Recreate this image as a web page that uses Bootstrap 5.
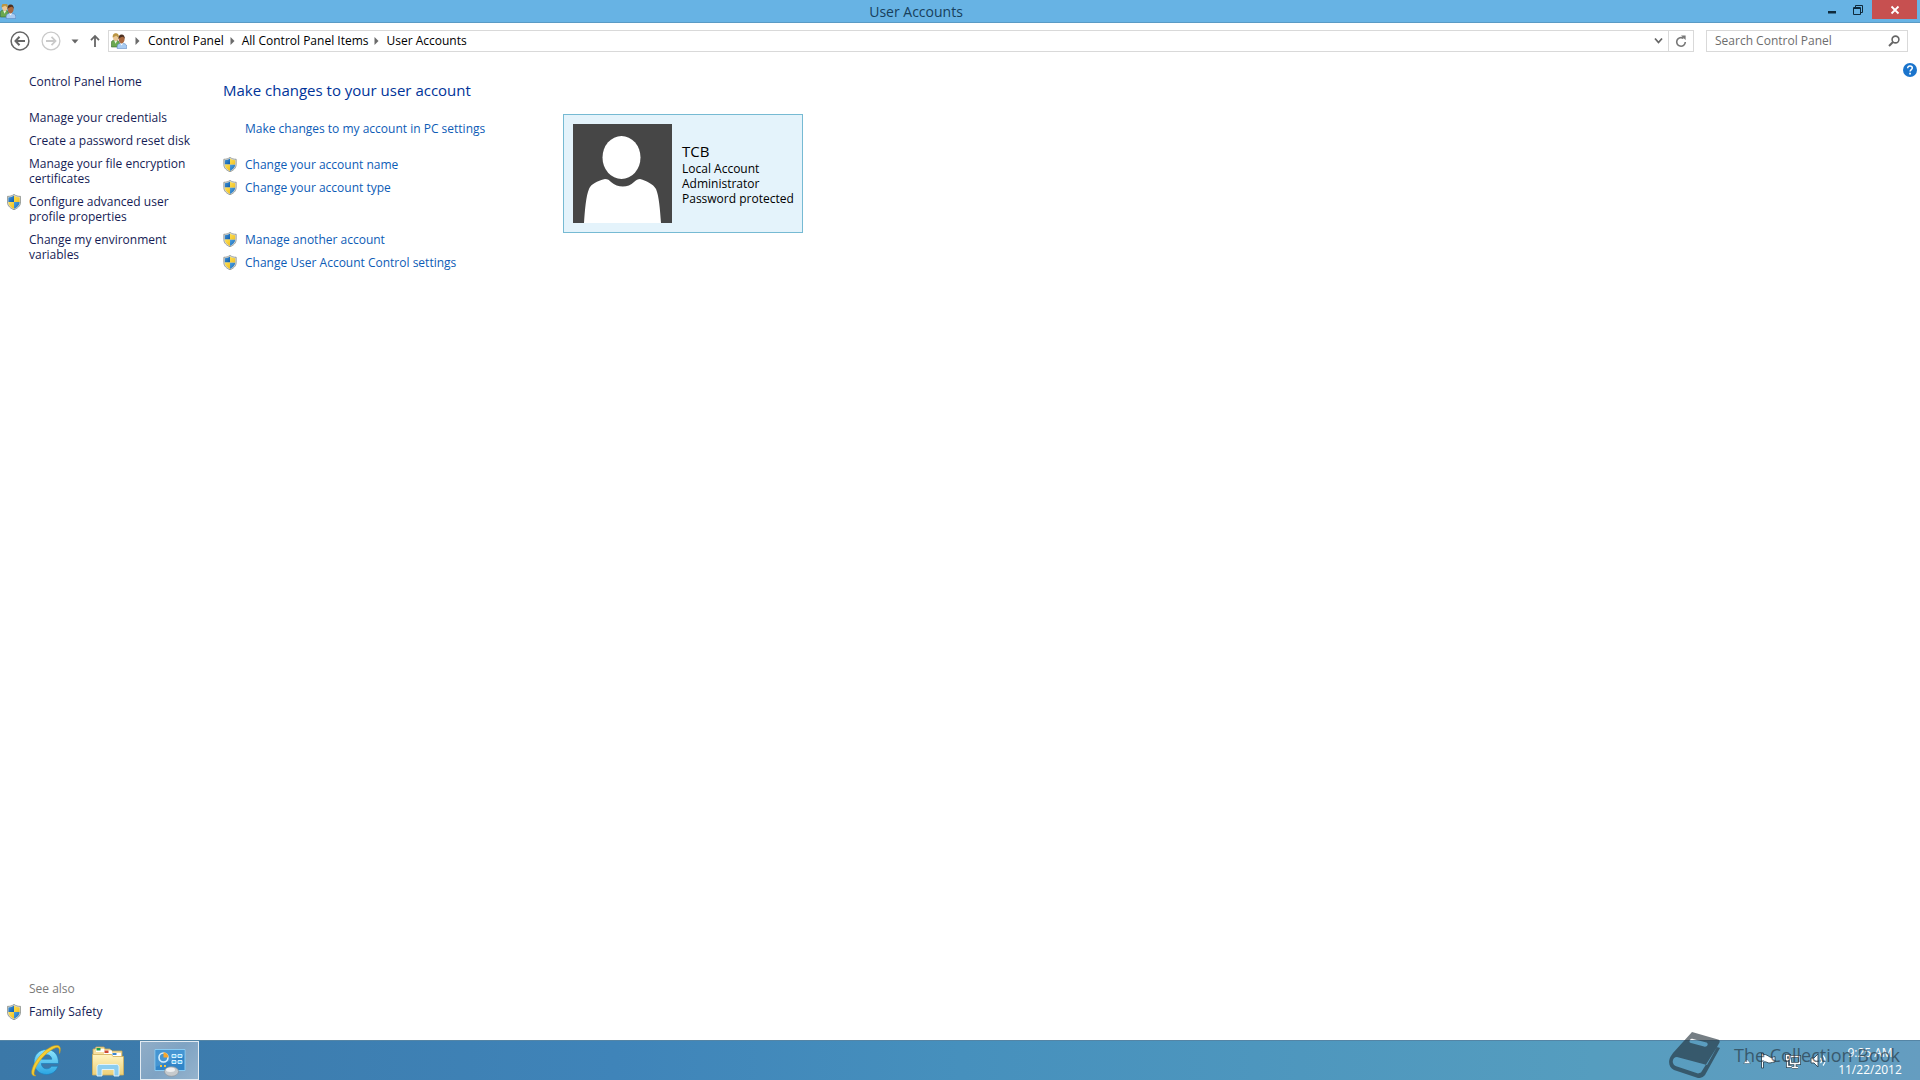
<!DOCTYPE html>
<html lang="en">
<head>
<meta charset="utf-8">
<meta name="viewport" content="width=device-width, initial-scale=1">
<title>User Accounts</title>
<link href="https://cdn.jsdelivr.net/npm/bootstrap@5.3.0/dist/css/bootstrap.min.css" rel="stylesheet">
<script src="https://cdn.jsdelivr.net/npm/bootstrap@5.3.0/dist/js/bootstrap.bundle.min.js"></script>
<style>
body{font:12px/15px "Open Sans","Noto Sans",sans-serif;color:#000;background:#fff}
button{border:0;background:none;padding:0;display:flex;align-items:center;justify-content:center}
svg{display:block;flex:none}
a{text-decoration:none}
a:hover{text-decoration:underline}
.titlebar{height:23px;background:#67b3e4;border-bottom:1px solid #5a9bc5}
.titlebar h1{font-size:14px;line-height:24px;color:#17405c}
.title-end{width:104px;padding-right:3px}
.title-end button{height:19px;width:26px}
.title-end .close-btn{width:45px;background:#c75050}
.toolbar{height:36px;padding:0 12px 0 10px;gap:8px}
.nav-btns{width:90px}
.address{height:22px;border:1px solid #d9d9d9;padding-left:2px}
.address a,.searchbox input{line-height:15px;margin-bottom:1px}
.address a{color:#000}
.crumb-arrow{width:18px}
.crumb-first{width:21px}
.address button{height:20px;width:19px}
.address .refresh{width:25px;border-left:1px solid #d9d9d9}
.searchbox{height:22px;width:202px;border:1px solid #d9d9d9;padding:0 7px 0 8px}
.searchbox input{border:0;outline:0;background:none;padding:0;width:100%}
.searchbox input::placeholder{color:#6d6d6d;opacity:1}
.side{width:202px;padding:15px 8px 20px 7px}
.side a{color:#151c55}
.side-home{margin:0 0 21px 22px}
.side ul{display:flex;flex-direction:column;gap:8px}
.slot{width:14px;flex:none}
.row-link{display:flex;gap:8px}
.see{color:#7a7a7a;margin:0 0 8px 22px}
.tasks{padding:20px 0 0 21px;width:361px}
.tasks h2{font-size:15px;line-height:22px;color:#039;margin:0 0 20px}
.tasks a{color:#0d5cb6}
.tasks ul{display:flex;flex-direction:column;gap:8px;margin-bottom:21px}
.tasks ul+ul+ul{margin-top:37px}
.account{width:240px;height:119px;border:1px solid #76bad3;background:#e4f3fb;margin-top:55px;padding:0 9px;gap:10px}
.account h3{font-size:15px;line-height:20px;margin:0}
.help-btn{margin:4px 3px 0 0;width:14px;height:14px}
.taskbar{height:40px;border-top:1px solid #5585a5;color:#fff;background:linear-gradient(90deg,#3b78a8,#3f84b9 32%,#4690bd 50%,#559dbf 83%,#659dc0);padding-left:16px}
.taskbar .task{width:60px;height:39px}
.taskbar .task+.task{width:64px}
.taskbar .task.active{width:59px;border:1px solid #e3ebf2;background:linear-gradient(135deg,#90adc7,#7fa3c3 50%,#94b3cd)}
.tray{gap:9px;padding-right:16px}
.clock{width:68px;line-height:17px;text-align:center}
.watermark{right:20px;bottom:2px;color:#22303a;opacity:.62;font-size:18px;line-height:46px;gap:14px;pointer-events:none}
</style>
</head>
<body class="d-flex flex-column min-vh-100 position-relative">
<svg width="0" height="0" class="position-absolute" aria-hidden="true">
<defs>
<linearGradient id="gb" x2="1" y2="1"><stop stop-color="#4fa3e2"/><stop offset="1" stop-color="#0f5cab"/></linearGradient>
<linearGradient id="gy" x2="1" y2="1"><stop stop-color="#ffe45c"/><stop offset="1" stop-color="#f0bd1c"/></linearGradient>
<linearGradient id="ge" x2="0" y2="1"><stop stop-color="#8fe4fb"/><stop offset="1" stop-color="#2aa5e2"/></linearGradient>
<linearGradient id="gf" x2="0" y2="1"><stop stop-color="#fff4c2"/><stop offset="1" stop-color="#ecd078"/></linearGradient>
<clipPath id="sc"><path d="M7 1.600C8.500 2.900 10.500 3.400 12.600 3.400V8c0 3.200-2.600 5.500-5.600 6.800C4 13.500 1.400 11.200 1.400 8V3.400C3.500 3.400 5.500 2.900 7 1.600z"/></clipPath>
</defs>
<symbol id="shield" viewBox="0 0 14 16"><path d="M7 .4C9 1.900 11 2.400 13.600 2.400V8c0 4-3.300 6.500-6.600 7.700C3.700 14.500.4 12 .4 8V2.400C3 2.400 5 1.900 7 .4z" fill="#d9dcd8" stroke="#858a84" stroke-width=".8"/><g clip-path="url(#sc)"><path d="M0 0h7v8H0z" fill="url(#gb)"/><path d="M7 8h7v8H7z" fill="url(#gb)"/><path d="M7 0h7v8H7z" fill="url(#gy)"/><path d="M0 8h7v8H0z" fill="url(#gy)"/></g></symbol>
<symbol id="users" viewBox="0 0 16 16"><path d="M.4 14V9.500C.4 8 1.800 7 4.200 7S8.500 8 8.500 10.500V14z" fill="#6aa84f" stroke="#37672d" stroke-width=".6"/><path d="M3.200 7.500l1.300 3.200L6.400 7.500z" fill="#e9f3df"/><path d="M2 4.200C2 2 3.100.6 4.800.6S7.700 2 7.700 4.200 6.500 8 4.800 8 2 6.500 2 4.200z" fill="#eac795"/><path d="M1.600 4.500C1.400 1.700 2.900.2 4.800.2c2 0 3.300 1.400 3 4C6.500 3.800 5.500 3.200 5 2.400 4.300 3.500 3 3.500 1.600 4.500z" fill="#b99543"/><path d="M6.200 15.600v-2.400c0-2 1.800-3 4.500-3s5 1 5 3.200v2.200z" fill="#a9ccf2" stroke="#5883bd" stroke-width=".6"/><path d="M9.200 10.300l1.300 2.300 1.700-2.300z" fill="#fff"/><path d="M7.700 6c0-2.300 1.200-3.800 2.900-3.800s3 1.500 3 3.800-1.300 4.400-3 4.400-2.900-2-2.900-4.400z" fill="#a9683f"/><path d="M7.500 6.200C7.100 3.200 8.600 1.400 10.600 1.400c2.100 0 3.500 1.900 3.100 4.800-.5-1.600-1-2.300-2-2.500-1.300.4-3.200.6-4.200 2.500z" fill="#4b3022"/></symbol>
<symbol id="crumb" viewBox="0 0 5 8"><path d="M.5 0L4.500 4 .5 8z" fill="#6b6b6b"/></symbol>
</svg>

<header class="titlebar d-flex justify-content-between">
<svg width="16" height="16" class="mt-1"><use href="#users" y="-1" width="16" height="16"/></svg>
<h1 class="flex-grow-1 text-center m-0">User Accounts</h1>
<div class="title-end d-flex justify-content-end">
<button type="button" aria-label="Minimize"><svg width="10" height="10"><path d="M0 6h8v2.500H0z" fill="#0f2a3c"/></svg></button>
<button type="button" aria-label="Restore"><svg width="12" height="12" fill="none" stroke="#0f2a3c"><path d="M.5 3.500h7v7h-7zM0 4.500h8M2.500 3V1.500h7v7H8"/></svg></button>
<button type="button" class="close-btn" aria-label="Close"><svg width="10" height="10"><path d="M1.500 1.500l7 7M8.500 1.500l-7 7" stroke="#fff" stroke-width="1.800"/></svg></button>
</div>
</header>

<nav class="toolbar d-flex align-items-center">
<div class="nav-btns d-flex align-items-center justify-content-between">
<button type="button" aria-label="Back"><svg width="20" height="20" fill="none" stroke="#666"><circle cx="10" cy="10" r="8.900" stroke-width="1.500"/><path d="M15 10H6M9.500 5.800L5.500 10l4 4.200" stroke-width="2"/></svg></button>
<button type="button" aria-label="Forward"><svg width="20" height="20" fill="none" stroke="#c9c9c9"><circle cx="10" cy="10" r="8.900" stroke-width="1.300"/><path d="M5 10h9M10.500 5.800l4 4.200-4 4.200" stroke-width="1.800"/></svg></button>
<button type="button" aria-label="Recent locations"><svg width="8" height="5"><path d="M.5.5h7L4 4.500z" fill="#666"/></svg></button>
<button type="button" aria-label="Up"><svg width="10" height="14" fill="none" stroke="#666" stroke-width="1.800"><path d="M5 13V2M1 6.200L5 2l4 4.200"/></svg></button>
</div>
<div class="address flex-grow-1 d-flex align-items-center">
<svg width="16" height="16"><use href="#users"/></svg>
<svg class="crumb-first" height="8"><use href="#crumb" x="8" width="5" height="8"/></svg>
<a href="#">Control Panel</a>
<svg class="crumb-arrow" height="8"><use href="#crumb" x="6" width="5" height="8"/></svg>
<a href="#">All Control Panel Items</a>
<svg class="crumb-arrow" height="8"><use href="#crumb" x="6" width="5" height="8"/></svg>
<a href="#">User Accounts</a>
<button type="button" class="ms-auto" aria-label="Previous locations"><svg width="9" height="8" fill="none" stroke="#666" stroke-width="1.800"><path d="M1 1.500l3.500 4 3.500-4"/></svg></button>
<button type="button" class="refresh" aria-label="Refresh"><svg width="12" height="13" fill="none" stroke="#777" stroke-width="1.600"><path d="M8.500 3.400A4.300 4.300 0 1 0 10.300 7"/><path d="M6 .5h4.600v4.600z" fill="#777" stroke="none"/></svg></button>
</div>
<div class="searchbox d-flex align-items-center ms-1">
<input type="search" placeholder="Search Control Panel" aria-label="Search Control Panel">
<svg width="12" height="12" fill="none" stroke="#666"><circle cx="7.500" cy="4.500" r="3.400" stroke-width="1.600"/><path d="M5 7L1 11" stroke-width="2"/></svg>
</div>
</nav>

<main class="flex-grow-1 d-flex align-items-stretch">
<aside class="side d-flex flex-column flex-shrink-0">
<a href="#" class="side-home">Control Panel Home</a>
<ul class="list-unstyled m-0">
<li class="row-link"><span class="slot"></span><a href="#">Manage your credentials</a></li>
<li class="row-link"><span class="slot"></span><a href="#">Create a password reset disk</a></li>
<li class="row-link"><span class="slot"></span><a href="#">Manage your file encryption certificates</a></li>
<li class="row-link"><svg width="14" height="16"><use href="#shield"/></svg><a href="#">Configure advanced user profile properties</a></li>
<li class="row-link"><span class="slot"></span><a href="#">Change my environment variables</a></li>
</ul>
<div class="mt-auto">
<p class="see">See also</p>
<div class="row-link"><svg width="14" height="16"><use href="#shield"/></svg><a href="#">Family Safety</a></div>
</div>
</aside>
<section class="tasks flex-shrink-0">
<h2>Make changes to your user account</h2>
<ul class="list-unstyled">
<li class="row-link"><span class="slot"></span><a href="#">Make changes to my account in PC settings</a></li>
</ul>
<ul class="list-unstyled">
<li class="row-link"><svg width="14" height="15"><use href="#shield"/></svg><a href="#">Change your account name</a></li>
<li class="row-link"><svg width="14" height="15"><use href="#shield"/></svg><a href="#">Change your account type</a></li>
</ul>
<ul class="list-unstyled">
<li class="row-link"><svg width="14" height="15"><use href="#shield"/></svg><a href="#">Manage another account</a></li>
<li class="row-link"><svg width="14" height="15"><use href="#shield"/></svg><a href="#">Change User Account Control settings</a></li>
</ul>
</section>
<section class="account d-flex align-items-center flex-shrink-0">
<svg width="99" height="99"><path d="M0 0h99v99H0z" fill="#464646"/><ellipse cx="48.500" cy="33.500" rx="19" ry="21.500" fill="#fff"/><path d="M11 99c1-14 2-27 5-34 2-5 8-8 16-10 3 0 4 1 6 3 7 6 17 6 23 0 2-2 4-3 6-3 7 2 13 5 16 10 3 7 4 20 5 34z" fill="#fff"/></svg>
<div class="text-nowrap">
<h3 class="fw-normal">TCB</h3>
<div>Local Account</div>
<div>Administrator</div>
<div>Password protected</div>
</div>
</section>
<button type="button" class="help-btn ms-auto" aria-label="Help"><svg width="14" height="14"><circle cx="7" cy="7" r="7" fill="#1a74cc"/><path d="M4.700 5.300C4.700 3.700 5.700 3 7 3s2.300.8 2.300 2c0 1.600-2.200 1.600-2.200 3.600" fill="none" stroke="#fff" stroke-width="1.500"/><path d="M6.200 9.800h1.700v1.600H6.200z" fill="#fff"/></svg></button>
</main>

<footer class="taskbar d-flex align-items-center">
<button type="button" class="task" aria-label="Internet Explorer"><svg width="32" height="34" viewBox="0 0 32 34"><path d="M28.500 19.500H11.300c.3 3.300 2.400 5.300 5.400 5.300 2.200 0 3.800-.9 4.700-2.500h6.500C26.200 27.300 22 30.500 16.500 30.500 9.300 30.500 4 25.300 4 18S9.300 5.500 16.500 5.500c7.500 0 12.300 5.300 12 14zM21.800 15.200c-.4-2.700-2.300-4.500-5.100-4.500s-4.800 1.800-5.300 4.500z" fill="url(#ge)" stroke="#1c80bd" stroke-width=".7"/><path d="M29.500 9.500C31 5 30.500 2 27.500 1.500 20 .5 7.500 12 3 23c-2.300 5.800-1.500 9.500 3 8.700-2.700-.4-2.300-3.500-.6-7.500C9.500 15 19 6 25.500 3.700c3.500-1.200 4.500 1.300 4 5.800z" fill="#f4cf35" stroke="#d59d13" stroke-width=".6"/></svg></button>
<button type="button" class="task" aria-label="File Explorer"><svg width="34" height="32" viewBox="0 0 34 32"><path d="M2 28V4h2l1-2h8l1 2h5l2 2h10v22z" fill="#f6dfa0" stroke="#c8a654" stroke-width=".8"/><path d="M5 4h8v3H5z" fill="#fff"/><path d="M5.500 3h4v2.500h-4z" fill="#21a04a"/><path d="M13 5.500h8V9h-8z" fill="#fff"/><path d="M13.500 5.500h4V8h-4z" fill="#cf4a32"/><path d="M21 8h9v3h-9z" fill="#fff"/><path d="M21.500 8h4v2h-4z" fill="#3b86cf"/><path d="M1.500 30V9.500h19l1.500 2h10.500V30z" fill="url(#gf)" stroke="#d2b05c" stroke-width=".8"/><path d="M6 31V22c0-1.500 1-2.500 2.500-2.500h17c1.500 0 2.500 1 2.500 2.500v9h-5v-6.500H11V31z" fill="#8bcdf0" stroke="#e4f6ff" stroke-width=".9"/></svg></button>
<button type="button" class="task active" aria-label="Control Panel"><svg width="34" height="32" viewBox="0 0 34 32"><path d="M2 4.500h30v21H2z" fill="#3185c8" stroke="#8acbf2"/><path d="M2.500 5h29v5l-29 12z" fill="#5aa6dc" opacity=".5"/><circle cx="10.500" cy="12.500" r="4.500" fill="none" stroke="#d5efff" stroke-width="1.600"/><path d="M10.500 12.500V7.200a5.200 5.200 0 0 1 5 5.300z" fill="#f7a72c"/><path d="M19 9.500h4v3h-4zM25 9.500h4v3h-4zM19 15.500h4v3h-4zM25 15.500h4v3h-4z" fill="#4cb8ee" stroke="#e3f5ff" stroke-width=".9"/><path d="M7 20h2v2H7zM11 20h2v2h-2z" fill="#f6c645"/><ellipse cx="18.500" cy="26.500" rx="7" ry="4.800" fill="#c6cacd" stroke="#8d9499" stroke-width=".7"/><ellipse cx="17.500" cy="24.800" rx="4.500" ry="2.200" fill="#fff" opacity=".7"/></svg></button>
<div class="tray d-flex align-items-center ms-auto">
<button type="button" aria-label="Show hidden icons"><svg width="8" height="6"><path d="M.5 5.500h7L4 1z" fill="#fff" stroke="#34566b" stroke-width=".5"/></svg></button>
<button type="button" aria-label="Action Center"><svg width="16" height="17"><path d="M1.500 1v15h2v-6c3-1 4 1.500 6.500 1 2-.4 3-.8 5-1V4.500c-2 .4-3 1.500-5 .5S6 2 3.500 2.500V1z" fill="#fff" stroke="#2c4656" stroke-width=".9"/></svg></button>
<button type="button" aria-label="Network"><svg width="16" height="16" fill="none"><path d="M5.500 3.500h9v7h-9zM10 11v3M7 14.500h6M2.500 7v6.500h4M1.500 2.500h3v4h-3z" stroke="#2c4656" stroke-width="3"/><path d="M5.500 3.500h9v7h-9zM10 11v3M7 14.500h6M2.500 7v6.500h4M1.500 2.500h3v4h-3z" stroke="#fff" stroke-width="1.400"/></svg></button>
<button type="button" aria-label="Volume"><svg width="17" height="15"><path d="M1 5h3l4-4v13l-4-4H1z" fill="#fff" stroke="#2c4656" stroke-width=".9"/><path d="M10.500 5c1.300 1.500 1.300 3.500 0 5M13 2.500c2.700 3 2.700 7 0 10" fill="none" stroke="#fff" stroke-width="1.300"/></svg></button>
<div class="clock"><div>9:25 AM</div><div>11/22/2012</div></div>
</div>
</footer>

<div class="watermark position-absolute d-flex align-items-center">
<svg width="51" height="46" viewBox="0 0 51 46"><path fill-rule="evenodd" d="M23 0l26 7.500c1.500.5 2 1.500 1.500 3L38 33 8 25C5 25 3 28 4 31c.5 2 2 3 4 3.500l21 7 3-1L48 15l3 1-15 27c-1.500 2-5 3.500-7 3L5 38C1 36.500-.5 32 .3 28 1 25 2 24 4 21zM21 8c-1 1.500-.5 2.500 1 3l13 3.500c1.500.5 3 0 3.500-1.500.5-1 0-2-1-2.500L24 7c-1.500-.4-2.400 0-3 1z" fill="#22303a"/></svg>
<span>The Collection Book</span>
</div>
</body>
</html>
